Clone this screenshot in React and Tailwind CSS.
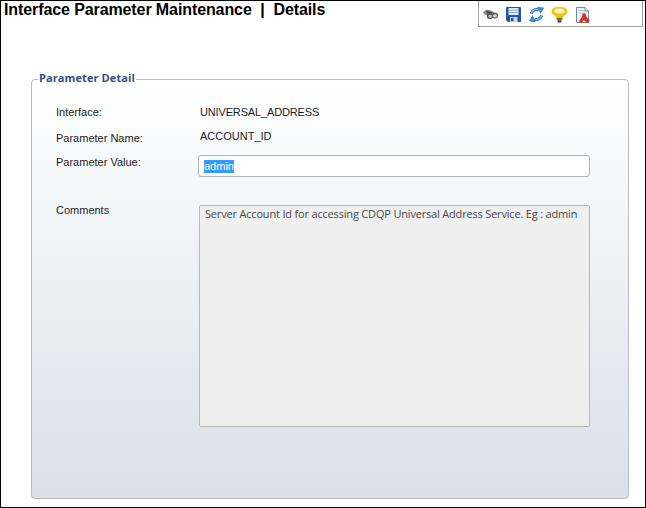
const arial = { fontFamily: '"Liberation Sans", Arial, sans-serif' };
const openSans = { fontFamily: '"Open Sans", sans-serif' };

function Binoculars() {
  return (
    <svg width="15" height="11" viewBox="0 0 15 11">
      <path d="M0 3 L4 0.5 L8 1.5 L11 3 L9 7 L5 7 L1 5 Z" fill="#8a8a8a" />
      <path d="M3 1.5 L7 3 L10 3.5 L8 5 L4 4 Z" fill="#3f3f3f" />
      <ellipse cx="7" cy="7" rx="3.2" ry="3" fill="#4e4e4e" />
      <ellipse cx="11.8" cy="6.6" rx="3.2" ry="3" fill="#5a5a5a" />
      <ellipse cx="7.2" cy="7.2" rx="1.9" ry="1.6" fill="#a9bdd6" />
      <ellipse cx="12" cy="6.8" rx="1.9" ry="1.6" fill="#cfdcec" />
    </svg>
  );
}

function Floppy() {
  return (
    <svg width="15" height="15" viewBox="0 0 15 15">
      <path d="M0 1 Q0 0 1 0 H14 Q15 0 15 1 V15 H2 L0 13 Z" fill="#1d55a8" />
      <rect x="2.5" y="1" width="10" height="7" fill="#e3edf7" />
      <rect x="2.5" y="2.6" width="10" height="1" fill="#8fb2dc" />
      <rect x="2.5" y="5" width="10" height="1" fill="#8fb2dc" />
      <rect x="4" y="10" width="7.5" height="5" fill="#d4d8de" />
      <rect x="5" y="11" width="2.5" height="3.2" fill="#33507f" />
    </svg>
  );
}

function Refresh() {
  return (
    <svg width="15" height="15" viewBox="0 0 15 15">
      <path d="M2.4 6.6 A5.2 5.2 0 0 1 9.6 2.9" fill="none" stroke="#1b62b8" strokeWidth="3" />
      <path d="M2.4 6.6 A5.2 5.2 0 0 1 9.6 2.9" fill="none" stroke="#6fb4ee" strokeWidth="1.6" />
      <path d="M8.6 0 L14.6 1 L11.6 6.4 Z" fill="#3d8ddd" stroke="#1b62b8" strokeWidth="0.5" />
      <path d="M12.6 8.4 A5.2 5.2 0 0 1 5.4 12.1" fill="none" stroke="#1b62b8" strokeWidth="3" />
      <path d="M12.6 8.4 A5.2 5.2 0 0 1 5.4 12.1" fill="none" stroke="#6fb4ee" strokeWidth="1.6" />
      <path d="M6.4 15 L0.4 14 L3.4 8.6 Z" fill="#3d8ddd" stroke="#1b62b8" strokeWidth="0.5" />
    </svg>
  );
}

function Bulb() {
  return (
    <svg width="17" height="17" viewBox="0 0 18 17" className="-ml-[1px]">
      <path d="M0.5 5.5 C0.5 1.5 5 0.3 9 0.3 C13 0.3 17.5 1.5 17.5 5.5 C17.5 8.5 12.5 9.5 12 12.5 H6 C5.5 9.5 0.5 8.5 0.5 5.5 Z" fill="#f2c61f" />
      <ellipse cx="9" cy="4.8" rx="5.2" ry="2.6" fill="#fdf7b8" />
      <rect x="6" y="12" width="6" height="2.5" fill="#7d6a45" />
      <rect x="6.8" y="14.5" width="4.4" height="2.5" rx="1" fill="#4b4030" />
    </svg>
  );
}

function Pdf() {
  return (
    <svg width="14" height="16" viewBox="0 0 14 16">
      <path d="M0.5 0.5 H9 L12.5 4 V15.5 H0.5 Z" fill="#f1f3f8" stroke="#7189b3" />
      <path d="M9 0.5 V4 H12.5" fill="#dfe6f2" stroke="#7189b3" />
      <rect x="2.5" y="3" width="5" height="1" fill="#a9b9d4" />
      <rect x="2.5" y="5.5" width="8" height="1" fill="#c3cede" />
      <path d="M6.5 6.5 L9.5 6.5 L10.5 10 L13.5 13 L13 15.8 L10.5 15.8 L8 13 L5.5 15.8 L3.5 15.8 L3.5 13 L6 10 Z" fill="#dc2f1c" />
    </svg>
  );
}

export default function App() {
  return (
    <div className="w-[646px] h-[508px] border border-black bg-white flex flex-col overflow-hidden" style={arial}>
      <div className="flex justify-between h-[26px] pl-[3px] pr-[2px]">
        <h1 className="text-[16px] leading-[18px] font-bold tracking-[-0.1px] text-black whitespace-pre">Interface Parameter Maintenance  |  Details</h1>
        <div className="w-[165px] h-[26px] border-x border-b border-[#a3a3a3] flex items-center pl-[4px] pt-[2px] gap-2">
          <Binoculars />
          <Floppy />
          <Refresh />
          <Bulb />
          <Pdf />
        </div>
      </div>

      <fieldset className="mt-[44px] ml-[30px] w-[598px] h-[428px] border border-[#bdbdbd] rounded-[4px] bg-gradient-to-b from-white to-[#dadfe8] pl-6 pr-[38px]">
        <legend className="-ml-[18px] px-[1px] pb-[3px] text-[11px] leading-[13px] font-bold tracking-[0.1px] text-[#2f4f87]" style={openSans}>
          Parameter Detail
        </legend>

        <div className="grid grid-cols-[144px_1fr] text-[11px] leading-[14px] text-[#1c1c1c]">
          <div className="mt-[18px]">Interface:</div>
          <div className="mt-[18px] tracking-[-0.15px]">UNIVERSAL_ADDRESS</div>
          <div className="mt-[12px]">Parameter Name:</div>
          <div className="mt-[10px]">ACCOUNT_ID</div>
          <div className="mt-[10px]">Parameter Value:</div>
          <div className="mt-[10px] -ml-[2px] h-[22px] w-[392px] bg-white border border-[#b4b4b4] rounded-[3px] pl-[5px] flex items-center">
            <span className="bg-[#3399ff] text-white leading-[13px]">admin</span>
          </div>
          <div className="mt-[26px]">Comments</div>
          <div className="mt-[28px] -ml-[1px] h-[222px] w-[391px] bg-[#efefef] border border-[#b8b8b8] rounded-[2px] px-[5px] pt-[1px] text-[11px] leading-[14px] tracking-[-0.18px] text-[#4a4a4a] whitespace-nowrap" style={openSans}>
            Server Account Id for accessing CDQP Universal Address Service. Eg : admin
          </div>
        </div>
      </fieldset>
    </div>
  );
}
